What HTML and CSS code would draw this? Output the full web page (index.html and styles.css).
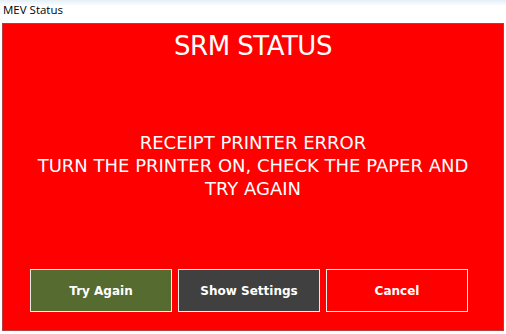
FILE: index.html
```html
<!DOCTYPE html>
<html>
<head>
<meta charset="utf-8">
<link rel="stylesheet" href="styles.css">
</head>
<body>
<div class="window">
  <div class="titlebar">MEV Status</div>
  <div class="panel">
    <h1 class="heading">SRM STATUS</h1>
    <div class="message">
      <p>RECEIPT PRINTER ERROR</p>
      <p>TURN THE PRINTER ON, CHECK THE PAPER AND</p>
      <p>TRY AGAIN</p>
    </div>
    <div class="actions">
      <button class="btn btn-retry">Try Again</button>
      <button class="btn btn-settings">Show Settings</button>
      <button class="btn btn-cancel">Cancel</button>
    </div>
  </div>
</div>
</body>
</html>
```
FILE: styles.css
```css
html, body {
  margin: 0;
  padding: 0;
  width: 506px;
  height: 334px;
  overflow: hidden;
  background: #ffffff;
}
.window {
  display: flex;
  flex-direction: column;
  height: 334px;
  background: linear-gradient(180deg, #e3eef8 0px, #ffffff 6px, #ffffff 100%);
}
.titlebar {
  height: 22px;
  padding-left: 3px;
  font-family: "Open Sans", "DejaVu Sans", sans-serif;
  font-size: 11.5px;
  line-height: 20px;
  color: #000;
}
.panel {
  margin: 1px 2px 3px 2px;
  flex: 1;
  background: #ff0000;
  border: 1px solid #b04040;
  display: flex;
  flex-direction: column;
  align-items: center;
  color: #ffffff;
  font-family: "DejaVu Sans", sans-serif;
}
.heading {
  margin: 6px 0 0 0;
  font-weight: normal;
  font-size: 26px;
  line-height: 32px;
  letter-spacing: -0.5px;
}
.message {
  flex: 1;
  display: flex;
  flex-direction: column;
  justify-content: center;
  text-align: center;
  font-size: 18px;
  line-height: 23px;
  padding-bottom: 0;
}
.message p { margin: 0; }
.actions {
  align-self: flex-start;
  display: flex;
  gap: 6px;
  margin: 0 0 18px 27px;
}
.btn {
  width: 142px;
  height: 43px;
  border: 1px solid #f4f0e8;
  color: #ffffff;
  font-family: "DejaVu Sans", sans-serif;
  font-weight: bold;
  font-size: 12px;
  padding: 0;
}
.btn-retry { background: #556b2f; }
.btn-settings { background: #404040; }
.btn-cancel { background: #ff0000; }
```
